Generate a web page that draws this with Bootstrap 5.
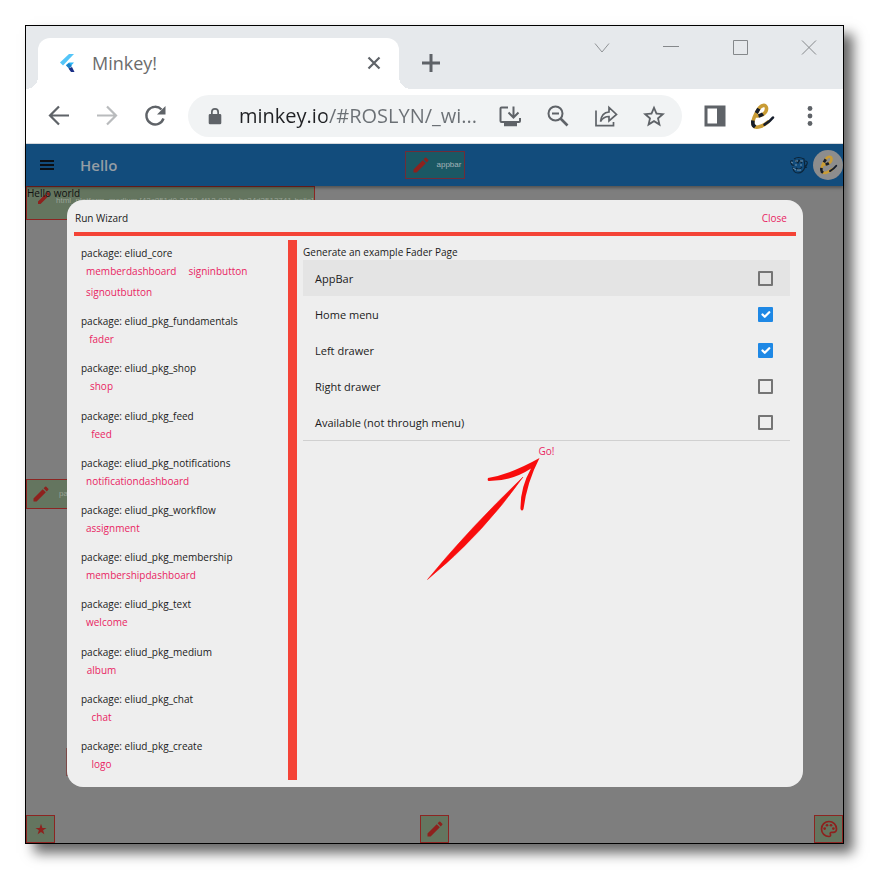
<!DOCTYPE html>
<html lang="en">
<head>
<meta charset="utf-8">
<meta name="viewport" content="width=device-width, initial-scale=1">
<title>Minkey!</title>
<link href="https://cdn.jsdelivr.net/npm/bootstrap@5.3.0/dist/css/bootstrap.min.css" rel="stylesheet">
<style>
  body { font-family: "Open Sans", "Noto Sans", sans-serif; font-size: 10px; line-height: 16px; color: #1b1b1b; background: #fff; padding: 25px 26px 26px 25px; }
  svg { display: block; flex: none; }
  .plain { border: 0; background: none; padding: 0; color: inherit; text-decoration: none; }
  .browser { min-height: calc(100vh - 51px); border: 1px solid #000; box-shadow: 9px 9px 12px rgba(0,0,0,.6); }

  .tabstrip { background: #e6e9ec; padding: 12px 0 0 12px; height: 63px; }
  .tab { flex: 0 1 361px; min-width: 0; background: #fff; border-radius: 12px 12px 0 0; padding: 0 16px 2px 20px; position: relative; color: #6c6c6c; font-size: 18px; line-height: 24px; }
  .tab::before, .tab::after { content: ""; position: absolute; bottom: 0; width: 12px; height: 12px; }
  .tab::before { right: 100%; background: radial-gradient(circle at 0 0, transparent 12px, #fff 12px); }
  .tab::after { left: 100%; background: radial-gradient(circle at 100% 0, transparent 12px, #fff 12px); }
  .newtab { margin-left: 20px; padding-bottom: 2px; }
  .winctl { margin-top: -12px; height: 44px; }
  .winctl button { width: 69px; }

  .toolbar { height: 55px; padding: 0 21px; gap: 21px; border-bottom: 1px solid #dadce0; color: #5f6368; }
  .iconset { gap: 24px; }
  .iconset-end { gap: 23px; }
  .omnibox { min-width: 0; height: 42px; border-radius: 21px; background: #f1f3f4; padding: 0 16px 0 15px; }
  .omnibox input { width: 0; min-width: 0; font-size: 20px; line-height: 28px; outline: 0; margin: 0 20px 0 12px; background: linear-gradient(90deg, #202124 88px, #6b7075 88px); -webkit-background-clip: text; background-clip: text; -webkit-text-fill-color: transparent; }

  .app { background: #7e7e7e; }
  .appbar { display: grid; grid-template-columns: 1fr auto 1fr; height: 42px; background: #124c7c; box-shadow: 0 2px 3px rgba(0,0,0,.35); z-index: 1; }
  .appbar-start { padding-left: 13px; }
  .appbar h1 { font-size: 15px; line-height: 20px; font-weight: 600; color: #959da4; margin-left: 25px; }
  .edit { background: #64755f; border: 1px solid #8c2522; color: #8e211d; height: 28px; }
  .edit small { font: 8px/12px "Liberation Sans", sans-serif; color: #99a296; }
  .edit-bar { background: #1b5864; border-color: #6f2c38; width: 60px; gap: 6px; padding-left: 5px; }
  .edit-bar small { color: #a3b3b8; }
  .edit-sq { width: 29px; }
  .edit-page { width: 60px; height: 30px; left: 0; gap: 8px; padding-left: 4px; }
  .edit-low { width: 60px; left: 40px; bottom: 67px; background: none; border-color: #7d4a48; }
  .hello { width: 289px; height: 34px; color: #101010; line-height: 12px; }
  .hello svg { position: absolute; left: 9px; top: 3px; color: #8e211d; }
  .hello small { position: absolute; left: 29px; top: 8px; white-space: nowrap; }
  .avatar { width: 30px; height: 30px; background: #8d8d8d; border-radius: 50%; }

  .scrim { position: absolute; inset: 0; padding: 56px 40px 56px 41px; z-index: 2; }
  .sheet { background: #eee; border-radius: 16px; padding: 0 7px 7px; }
  .sheet-head { height: 36px; border-bottom: 4px solid #f44336; padding: 4px 9px 0 1px; }
  .sheet-head h2 { font-size: 10px; line-height: 16px; }
  .pink { color: #e91e63; text-decoration: none; }
  .packages { flex: 0 0 214px; padding: 5px 6px 6px 7px; }
  .packages h3 { font-size: 10px; line-height: 16px; margin: 0; }
  .packages nav { column-gap: 2px; row-gap: 1px; }
  .packages a { min-width: 41px; padding: 0 5px; line-height: 20px; text-align: center; }
  .bar { flex: 0 0 9px; background: #f44336; }
  .wizard { padding: 5px 6px 0; }
  .wizard h3 { font-size: 10px; line-height: 15px; margin: 0; font-weight: 400; }
  .choices { border-bottom: 1px solid #d0d0d0; }
  .choice { height: 36px; padding: 0 17px 0 12px; font-size: 11px; line-height: 20px; }
  .choice:first-of-type { background: #e4e4e4; }
  .choice label { padding-top: 1px; }
  .choice .form-check-input { width: 15px; height: 15px; margin: 0; border: 2px solid #757575; border-radius: 1px; background-color: transparent; }
  .choice .form-check-input:checked { background-color: #1e88e5; border-color: #1e88e5; background-origin: border-box; }
  .go { line-height: 20px; }
  .pointer { position: absolute; left: 124px; top: 196px; }
</style>
<script src="https://cdn.jsdelivr.net/npm/bootstrap@5.3.0/dist/js/bootstrap.bundle.min.js"></script>
</head>
<body>
<svg width="0" height="0" class="position-absolute" aria-hidden="true">
  <symbol id="pencil" viewBox="0 0 24 24"><path fill="currentColor" d="M3 17.250V21h3.750L17.810 9.940l-3.750-3.750zM20.710 7.040a1 1 0 0 0 0-1.410l-2.340-2.340a1 1 0 0 0-1.410 0l-1.830 1.830 3.750 3.750z"/></symbol>
  <symbol id="snake" viewBox="0 0 25 27">
    <g fill="none" stroke-linejoin="round">
      <path stroke="#c99c35" stroke-width="3.600" stroke-linecap="round" d="M6 13C12 13.500 17 9.500 16.500 5 16 1 11 1.500 8 7 5 12 1.500 19 3.500 22.500 6 26.500 14 22.500 18 19"/>
      <path stroke="#161d2b" stroke-width="3.600" d="M8.500 12.900Q11 12.300 13 10.900M8.800 5.700L6.300 10M2.900 17.500Q2.500 21 3.500 22.500L5.200 23.900"/>
      <path stroke="#161d2b" stroke-width="2.600" stroke-linecap="round" d="M14.500 21.700Q20 18.500 23 14.500"/>
    </g>
  </symbol>
</svg>

<div class="browser d-flex flex-column">
  <div class="tabstrip d-flex">
    <div class="tab d-flex align-items-center">
      <svg width="18" height="20" viewBox="0 0 18 20"><path fill="#54c5f8" d="M11 1h5L5 12.500l-3-3z"/><path fill="#29b6f6" d="M11 9.500h5L11 15 8 12z"/><path fill="#1d80c8" d="M8 12.500l3-2.500 3 3-3 2.500z"/><path fill="#1a2f86" d="M10.500 15.500l3.500-1.500 2.500 5h-3.500z"/></svg>
      <span class="ms-3 flex-grow-1">Minkey!</span>
      <button class="plain" aria-label="Close tab"><svg width="18" height="18" viewBox="0 0 18 18" fill="none" stroke="#5f6368" stroke-width="2.200"><path d="M3.500 3.500l11 11M14.500 3.500l-11 11"/></svg></button>
    </div>
    <button class="plain newtab" aria-label="New tab"><svg width="24" height="24" viewBox="0 0 24 24" fill="none" stroke="#5f6368" stroke-width="3"><path d="M3 12h18M12 3v18"/></svg></button>
    <div class="winctl d-flex ms-auto">
      <button class="plain d-flex align-items-center justify-content-center" aria-label="Search tabs"><svg width="16" height="16" viewBox="0 0 16 16" fill="none" stroke="#909396"><path d="M1 3.500l7 8.500 7-8.500"/></svg></button>
      <button class="plain d-flex align-items-center justify-content-center" aria-label="Minimize"><svg width="16" height="16" viewBox="0 0 16 16" stroke="#85888b"><path d="M0 6.500h16"/></svg></button>
      <button class="plain d-flex align-items-center justify-content-center" aria-label="Maximize"><svg width="16" height="16" viewBox="0 0 16 16" fill="none" stroke="#85888b"><path d="M1.500.500h14v14h-14z"/></svg></button>
      <button class="plain d-flex align-items-center justify-content-center" aria-label="Close window"><svg width="16" height="16" viewBox="0 0 16 16" stroke="#85888b"><path d="M1 .500l14 14M15 .500l-14 14"/></svg></button>
    </div>
  </div>

  <div class="toolbar d-flex align-items-center bg-white">
    <div class="iconset d-flex">
      <button class="plain" aria-label="Back"><svg width="24" height="24" viewBox="0 0 24 24" fill="none" stroke="currentColor" stroke-width="2.200"><path d="M22 11.500H4M12 2.500l-9 9 9 9"/></svg></button>
      <button class="plain" aria-label="Forward"><svg width="24" height="24" viewBox="0 0 24 24" fill="none" stroke="#b9bbbd" stroke-width="2.200"><path d="M2 11.500h18M12 2.500l9 9-9 9"/></svg></button>
      <button class="plain" aria-label="Reload"><svg width="24" height="24" viewBox="0 0 24 24" fill="none" stroke="currentColor" stroke-width="2.400"><path d="M20.500 14.500A8.800 8.800 0 1 1 18.500 5.500"/><path fill="currentColor" stroke="none" d="M22.500 2v8.500h-8.500z"/></svg></button>
    </div>
    <div class="omnibox d-flex align-items-center flex-grow-1">
      <svg width="24" height="24" viewBox="0 0 24 24"><path fill="currentColor" d="M8 10V8a4 4 0 0 1 8 0v2h1a1.300 1.300 0 0 1 1.300 1.300V19a1.300 1.300 0 0 1-1.300 1.300H7A1.300 1.300 0 0 1 5.700 19v-7.700A1.300 1.300 0 0 1 7 10zm1.700 0h4.600V8a2.300 2.300 0 0 0-4.600 0z"/></svg>
      <input class="plain flex-grow-1" type="text" aria-label="Address" value="minkey.io/#ROSLYN/_wi...">
      <div class="iconset d-flex">
        <button class="plain" aria-label="Install"><svg width="24" height="24" viewBox="0 0 24 24" fill="none" stroke="currentColor" stroke-width="2"><path d="M10 3.500H3.500Q2.500 3.500 2.500 4.500V17Q2.500 18 3.500 18H21Q22 18 22 17v-3M15.500 2.500v10M10.500 8.500l5 5 5-5"/><path stroke-width="3.500" d="M6 20.500h13"/></svg></button>
        <button class="plain" aria-label="Zoom"><svg width="24" height="24" viewBox="0 0 24 24" fill="none" stroke="currentColor" stroke-width="2"><circle cx="9.500" cy="9.500" r="7"/><path d="M6 9.500h7"/><path stroke-width="2.600" d="M14.500 14.500l7 7"/></svg></button>
        <button class="plain" aria-label="Share"><svg width="24" height="24" viewBox="0 0 24 24" fill="none" stroke="currentColor" stroke-width="1.700"><path d="M2 6.500v15.200h17.500V18M6.500 17.500Q7.500 8.500 15 8V3.500l7.500 7-7.500 6.500v-4.500Q9.500 12.500 6.500 17.500z"/></svg></button>
        <button class="plain" aria-label="Bookmark"><svg width="24" height="24" viewBox="0 0 24 24"><path fill="currentColor" fill-rule="evenodd" d="M23 9.500l-7.900-.7L12 1.500 8.900 8.800 1 9.500l6 5.200L5.200 22.500 12 18.300l6.800 4.200-1.800-7.800zM12 16.100l-4.100 2.500 1.100-4.700-3.600-3.100 4.700-.4L12 6l1.900 4.400 4.700.4-3.600 3.100 1.100 4.700z"/></svg></button>
      </div>
    </div>
    <div class="iconset-end d-flex align-items-center">
      <button class="plain" aria-label="Side panel"><svg width="24" height="24" viewBox="0 0 24 24"><path fill="currentColor" fill-rule="evenodd" d="M1.500 1.500h21v21h-21zm3 3v15h9.500v-15z"/></svg></button>
      <button class="plain" aria-label="Profile"><svg width="25" height="27"><use href="#snake"/></svg></button>
      <button class="plain" aria-label="Menu"><svg width="24" height="24" viewBox="0 0 24 24" fill="currentColor"><circle cx="12" cy="4.500" r="2.400"/><circle cx="12" cy="12" r="2.400"/><circle cx="12" cy="19.500" r="2.400"/></svg></button>
    </div>
  </div>

  <div class="app position-relative flex-grow-1 d-flex flex-column">
    <div class="appbar align-items-center">
      <div class="appbar-start d-flex align-items-center">
        <button class="plain" aria-label="Open menu"><svg width="16" height="16" viewBox="0 0 16 16" stroke="#0b0f14" stroke-width="2"><path d="M1 4h14M1 8h14M1 12h14"/></svg></button>
        <h1 class="mb-0">Hello</h1>
      </div>
      <button class="plain edit edit-bar d-flex align-items-center"><svg width="20" height="20"><use href="#pencil"/></svg><small>appbar</small></button>
      <div class="d-flex align-items-center justify-content-end">
        <button class="plain me-1" aria-label="Monkey"><svg width="20" height="18" viewBox="0 0 20 18" fill="none" stroke="#0c2438" stroke-width="1.100"><path d="M4 5Q1 4 2 7t3 2M16 5q3 0 2 3t-3 2M5 3q4-3 10 0l1 8q-2 6-7 6T4 11M6 4l3 3 1-3 3 3M7 12q3 3 6-1M15 12l3-1"/><path stroke="#7f9bb0" stroke-width=".9" d="M6 5h3M11 5h3M8 14h4M2 6l2 1M7 8v2M12 8v2M4 12l3 2"/></svg></button>
        <button class="plain avatar d-flex align-items-center justify-content-center" aria-label="Account"><svg width="19" height="20"><use href="#snake"/></svg></button>
      </div>
    </div>

    <div class="flex-grow-1 d-flex flex-column justify-content-between">
      <div class="hello edit position-relative"><svg width="16" height="16"><use href="#pencil"/></svg><small>html_platform_medium [42c851d0-2478-4f12-821e-bc24d3513741-hello]</small><span class="position-relative">Hello world</span></div>
      <div class="d-flex justify-content-between">
        <button class="plain edit edit-sq d-flex align-items-center justify-content-center" aria-label="Star"><svg width="12" height="12" viewBox="0 0 24 24"><path fill="currentColor" d="M12 17.800l6.700 4.700-2.500-7.800 6.800-4.900h-8.200L12 1.500 9.200 9.800H1l6.800 4.900-2.500 7.800z"/></svg></button>
        <button class="plain edit edit-sq d-flex align-items-center justify-content-center" aria-label="Edit"><svg width="20" height="20"><use href="#pencil"/></svg></button>
        <button class="plain edit edit-sq d-flex align-items-center justify-content-center" aria-label="Theme"><svg width="20" height="20" viewBox="0 0 24 24"><path fill="none" stroke="currentColor" stroke-width="2" d="M12 3a9 9 0 0 0 0 18c1.500 0 2.300-1.200 1.700-2.500-.8-1.500 0-2.500 1.500-2.500H17c2.300 0 4-1.700 4-4 0-5-4-9-9-9z"/><g fill="currentColor"><circle cx="6.800" cy="11.500" r="1.600"/><circle cx="9.600" cy="7.500" r="1.600"/><circle cx="14.400" cy="7.500" r="1.600"/><circle cx="17.200" cy="11.500" r="1.600"/></g></svg></button>
      </div>
    </div>
    <button class="plain edit edit-page d-flex align-items-center position-absolute top-50 translate-middle-y"><svg width="20" height="20"><use href="#pencil"/></svg><small>page</small></button>
    <div class="edit edit-low position-absolute"></div>

    <div class="scrim d-flex">
      <div class="sheet flex-grow-1 d-flex flex-column" role="dialog" aria-labelledby="dlg">
        <div class="sheet-head d-flex align-items-center justify-content-between">
          <h2 id="dlg" class="mb-0 fw-normal">Run Wizard</h2>
          <a href="#" class="pink">Close</a>
        </div>
        <div class="d-flex flex-grow-1 mt-1">
          <div class="packages d-flex flex-column justify-content-between">
            <section><h3 class="fw-normal">package: eliud_core</h3><nav class="d-flex flex-wrap"><a href="#" class="pink">memberdashboard</a><a href="#" class="pink">signinbutton</a><a href="#" class="pink">signoutbutton</a></nav></section>
            <section><h3 class="fw-normal">package: eliud_pkg_fundamentals</h3><nav class="d-flex flex-wrap"><a href="#" class="pink">fader</a></nav></section>
            <section><h3 class="fw-normal">package: eliud_pkg_shop</h3><nav class="d-flex flex-wrap"><a href="#" class="pink">shop</a></nav></section>
            <section><h3 class="fw-normal">package: eliud_pkg_feed</h3><nav class="d-flex flex-wrap"><a href="#" class="pink">feed</a></nav></section>
            <section><h3 class="fw-normal">package: eliud_pkg_notifications</h3><nav class="d-flex flex-wrap"><a href="#" class="pink">notificationdashboard</a></nav></section>
            <section><h3 class="fw-normal">package: eliud_pkg_workflow</h3><nav class="d-flex flex-wrap"><a href="#" class="pink">assignment</a></nav></section>
            <section><h3 class="fw-normal">package: eliud_pkg_membership</h3><nav class="d-flex flex-wrap"><a href="#" class="pink">membershipdashboard</a></nav></section>
            <section><h3 class="fw-normal">package: eliud_pkg_text</h3><nav class="d-flex flex-wrap"><a href="#" class="pink">welcome</a></nav></section>
            <section><h3 class="fw-normal">package: eliud_pkg_medium</h3><nav class="d-flex flex-wrap"><a href="#" class="pink">album</a></nav></section>
            <section><h3 class="fw-normal">package: eliud_pkg_chat</h3><nav class="d-flex flex-wrap"><a href="#" class="pink">chat</a></nav></section>
            <section><h3 class="fw-normal">package: eliud_pkg_create</h3><nav class="d-flex flex-wrap"><a href="#" class="pink">logo</a></nav></section>
          </div>
          <div class="bar"></div>
          <div class="wizard flex-grow-1 position-relative">
            <h3>Generate an example Fader Page</h3>
            <div class="choices">
              <div class="choice d-flex align-items-center justify-content-between"><label for="c1">AppBar</label><input class="form-check-input" type="checkbox" id="c1"></div>
              <div class="choice d-flex align-items-center justify-content-between"><label for="c2">Home menu</label><input class="form-check-input" type="checkbox" id="c2" checked></div>
              <div class="choice d-flex align-items-center justify-content-between"><label for="c3">Left drawer</label><input class="form-check-input" type="checkbox" id="c3" checked></div>
              <div class="choice d-flex align-items-center justify-content-between"><label for="c4">Right drawer</label><input class="form-check-input" type="checkbox" id="c4"></div>
              <div class="choice d-flex align-items-center justify-content-between"><label for="c5">Available (not through menu)</label><input class="form-check-input" type="checkbox" id="c5"></div>
            </div>
            <div class="go text-center"><a href="#" class="pink">Go!</a></div>
            <svg class="pointer" width="126" height="150" viewBox="421 436 126 150" fill="#f80d0d" aria-hidden="true"><path d="M427.500 579.500Q468 530 523 477 482 535 427.500 579.500z" stroke="#f80d0d" stroke-width=".5"/><path d="M539.500 458Q511 474 488 478q-1 3 1 3Q512 481 531 468.500 520 488 520.500 509q1.500 3 3 0Q527 482 539.500 458z"/></svg>
          </div>
        </div>
      </div>
    </div>
  </div>
</div>
</body>
</html>
